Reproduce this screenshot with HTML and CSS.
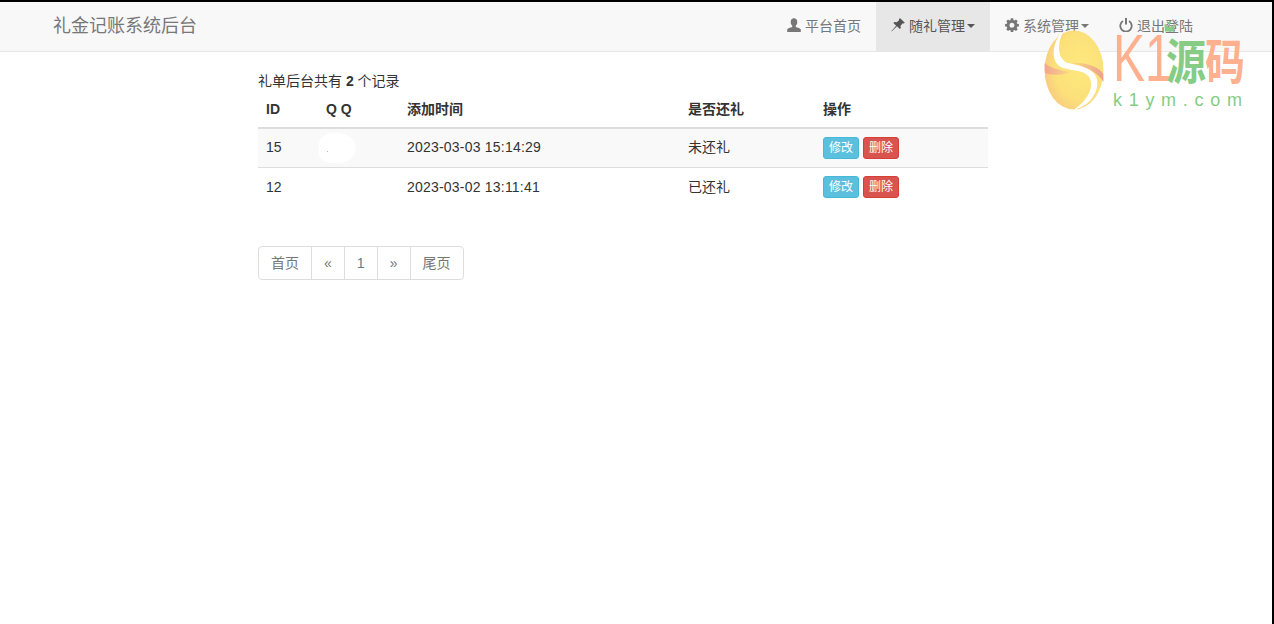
FILE: index.html
```html
<!DOCTYPE html>
<html lang="zh-CN">
<head>
<meta charset="utf-8">
<title>礼金记账系统后台</title>
<link rel="stylesheet" href="styles.css">
</head>
<body>
<nav class="navbar">
  <a class="brand">礼金记账系统后台</a>
  <ul class="nav">
    <li><a><svg class="ico" viewBox="0 0 14 14"><path fill="currentColor" d="M7 .2c2 0 3.300 1.500 3.300 3.700 0 1.600-.7 3-1.500 3.700v1.300c1.800.6 4.700 1.100 5 2.600V14H.2v-2.500c.3-1.500 3.200-2 5-2.600V7.600c-.8-.7-1.500-2.100-1.500-3.700C3.700 1.700 5 .2 7 .2z"/></svg>平台首页</a></li>
    <li class="open"><a><svg class="ico" viewBox="0 0 14 14"><path fill="currentColor" d="M9.200.2l4.600 4.500-1 .9-1-.3-2.300 2.400.3 2.400-1 1-2.800-2.800L.6 13.600l-.3-.3 4.800-5.500L2.400 5l1-1 2.400.3 2.400-2.300-.3-1z"/></svg>随礼管理<i class="caret"></i></a></li>
    <li><a><svg class="ico" viewBox="0 0 14 14"><path fill="currentColor" fill-rule="evenodd" d="M5.800.3h2.400l.3 1.800 1 .4 1.500-1 1.700 1.700-1 1.500.4 1 1.800.3v2.400l-1.800.3-.4 1 1 1.500-1.700 1.700-1.500-1-1 .4-.3 1.800H5.800l-.3-1.800-1-.4-1.500 1-1.700-1.700 1-1.500-.4-1-1.800-.3V6l1.800-.3.4-1-1-1.500L3 1.500l1.500 1 1-.4zM7 4.700a2.500 2.500 0 1 0 0 5 2.500 2.500 0 0 0 0-5z"/></svg>系统管理<i class="caret"></i></a></li>
    <li><a><svg class="ico" viewBox="0 0 14 14"><path fill="none" stroke="currentColor" stroke-width="1.800" d="M4 3a5.700 5.700 0 1 0 6 0"/><path fill="none" stroke="currentColor" stroke-width="2" d="M7 0v6.500"/></svg>退出登陆</a></li>
  </ul>
</nav>

<main class="content">
  <p class="summary">礼单后台共有 <b>2</b> 个记录</p>
  <table class="grid">
    <thead>
      <tr><th class="c-id">ID</th><th class="c-qq">Q Q</th><th class="c-time">添加时间</th><th class="c-back">是否还礼</th><th>操作</th></tr>
    </thead>
    <tbody>
      <tr class="odd"><td class="lift">15</td><td class="qq"><span class="blot"></span></td><td class="when lift">2023-03-03 15:14:29</td><td class="lift">未还礼</td><td><a class="btn info">修改</a><a class="btn danger">删除</a></td></tr>
      <tr><td>12</td><td></td><td class="when">2023-03-02 13:11:41</td><td>已还礼</td><td><a class="btn info">修改</a><a class="btn danger">删除</a></td></tr>
    </tbody>
  </table>
  <ul class="pager">
    <li>首页</li><li>«</li><li class="num">1</li><li class="next">»</li><li>尾页</li>
  </ul>
</main>

<div class="mark">
  <svg class="egg" viewBox="0 0 60 80">
    <defs>
      <radialGradient id="eg" cx="0.6" cy="0.45" r="0.65">
        <stop offset="0" stop-color="#fde97c"/><stop offset="0.65" stop-color="#fce07a"/><stop offset="1" stop-color="#f8c97f"/>
      </radialGradient>
      <linearGradient id="pl" x1="0" y1="0" x2="1" y2="0">
        <stop offset="0" stop-color="#f2a58f"/><stop offset="1" stop-color="#f9d58a"/>
      </linearGradient>
      <linearGradient id="pr" x1="0" y1="0" x2="1" y2="0">
        <stop offset="0" stop-color="#fbdc80"/><stop offset="1" stop-color="#ee9f8e"/>
      </linearGradient>
    </defs>
    <ellipse cx="30" cy="40" rx="29.500" ry="39.500" fill="url(#eg)"/>
    <path fill="url(#pl)" d="M.6 33C6 38 15 40 26 42 16 46 6 45 1.300 43 .7 40 .5 36 .6 33z"/>
    <path fill="url(#pr)" d="M27 33C40 32 54 36 59.300 44l.2 8C54 42 42 37 27 33z"/>
    <path fill="#fff" d="M20 .8C10 8 6 27 14 35c8 7 25 3 31 12 6 10-2 24-15 32.500C44 77 55 64 53 50 51 38 36 36 24 33 14 30 12 14 20 .8z"/>
  </svg>
  <div class="mark-text">
    <div class="mark-big">
      <span class="k1">K1</span>
      <span class="yuan"><svg class="crown" viewBox="0 0 16 18"><path fill="#86cc84" d="M8 0l2 3H8.700v4l2-2.500.8 1 2-2.500.6 1-.6 7H2.500l-.6-7 .6-1 2 2.500.8-1 2 2.500V3H6z"/></svg>源</span>
      <span class="ma">码</span>
    </div>
    <div class="mark-sub">k1ym.com</div>
  </div>
</div>
</body>
</html>
```
FILE: styles.css
```css
* { box-sizing: border-box; }
html, body { margin: 0; height: 100%; }
body {
  border-top: 2px solid #000;
  border-right: 2px solid #000;
  background: #fff;
  color: #333;
  font: 14px/20px "Liberation Sans", "Noto Sans CJK SC", sans-serif;
  overflow: hidden;
  position: relative;
}
.navbar {
  display: flex;
  justify-content: space-between;
  height: 50px;
  background: #f8f8f8;
  border-bottom: 1px solid #e7e7e7;
  padding: 0 64px 0 53px;
}
.brand { font-size: 18px; line-height: 49px; color: #777; }
.nav { display: flex; list-style: none; margin: 0; padding: 0; }
.nav a { display: flex; align-items: center; height: 49px; padding: 0 15px 2px; color: #777; }
.nav .open a { background: #e7e7e7; color: #555; }
.ico { width: 14px; height: 14px; margin: 0 4px 1px 0; }
.caret { width: 0; height: 0; margin-left: 2px; border: 4px solid transparent; border-top-color: currentColor; border-bottom: 0; }
.content { width: 730px; margin: 0 0 0 258px; padding-top: 19px; }
.summary { margin: 0 0 8px; color: #333; }
.grid { width: 100%; border-collapse: collapse; table-layout: fixed; }
.grid th { text-align: left; font-weight: bold; padding: 0 8px 8px; line-height: 20px; border-bottom: 2px solid #ddd; height: 29px; }
.grid td { padding: 0 8px; height: 39px; border-bottom: 1px solid #ddd; vertical-align: middle; }
.grid td.lift { padding-bottom: 2px; }
.grid tr:last-child td { border-bottom: 0; height: 40px; }
.odd td { background: #f9f9f9; }
.when { letter-spacing: .21px; }
.c-id { width: 60px; }
.c-qq { width: 81px; }
.c-time { width: 281px; }
.c-back { width: 135px; }
.qq { position: relative; }
.blot { position: absolute; left: 1px; top: 4px; width: 37px; height: 30px; background: #fff; border-radius: 38% 50% 48% 32%; }
.blot::after { content: ""; position: absolute; left: 8px; top: 18px; width: 1px; height: 1px; background: #bbb; }
.btn { display: inline-block; height: 22px; padding: 0 5px; margin-right: 4px; border: 1px solid; border-radius: 3px; font-size: 12px; line-height: 20px; color: #fff; }
.info { background: #5bc0de; border-color: #46b8da; }
.danger { background: #d9534f; border-color: #d43f3a; }
.pager { display: inline-flex; list-style: none; margin: 39px 0 0; padding: 0; color: #777; }
.pager li { height: 34px; padding: 0 12px; line-height: 32px; border: 1px solid #ddd; margin-left: -1px; background: #fff; text-align: center; }
.pager li:first-child { margin-left: 0; border-radius: 4px 0 0 4px; }
.pager li:last-child { border-radius: 0 4px 4px 0; }
.pager .next { width: 34px; padding: 0; }
.pager .num { color: #5a7f8f; }
.mark { position: absolute; left: 1044px; top: 28px; display: flex; pointer-events: none; }
.egg { width: 60px; height: 80px; }
.mark-text { margin-left: 9px; width: 136px; }
.mark-big { display: flex; height: 50px; margin-top: 4px; font: 40px/50px "Noto Sans CJK SC", sans-serif; color: #ffb08f; }
.k1 { width: 53px; font: 48px/50px "Liberation Sans", sans-serif; transform: scaleY(1.38); }
.yuan, .ma { width: 39px; font-weight: 700; transform: scaleY(1.2); }
.yuan { position: relative; color: #86cc84; }
.crown { position: absolute; left: -4px; top: -7px; width: 15px; height: 15px; }
.mark-sub { margin-top: 6px; font: 18px/20px "Liberation Sans", sans-serif; letter-spacing: 6.700px; color: #86cc84; white-space: nowrap; }
```
